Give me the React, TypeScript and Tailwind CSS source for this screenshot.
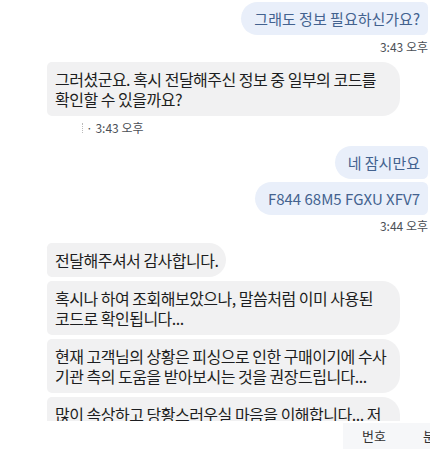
const font = { fontFamily: '"Noto Sans CJK KR", "Noto Sans", sans-serif' };

function Mine({ children, className = "" }: { children: React.ReactNode; className?: string }) {
  return (
    <div className={`flex justify-end ${className}`}>
      <div className="bg-[#e9effa] text-[#43628f] text-[15px] leading-[21px] pl-[13px] pr-[8px] py-[6px] rounded-l-[18px] rounded-r-[6px]">
        {children}
      </div>
    </div>
  );
}

function Theirs({ children, className = "" }: { children: React.ReactNode; className?: string }) {
  return (
    <div className={`flex justify-start ${className}`}>
      <div className="max-w-[353px] bg-[#f1f1f2] text-[#1d1e21] text-[16px] leading-[20px] tracking-[-0.5px] break-keep px-2 py-[7px] rounded-r-[18px] rounded-l-[5px]">
        {children}
      </div>
    </div>
  );
}

export default function App() {
  return (
    <div className="w-[430px] h-[449px] bg-white flex flex-col overflow-hidden" style={font}>
      <div className="flex-1 overflow-hidden pl-[47px] pr-[2px] pt-[2px]">
        <Mine>그래도 정보 필요하신가요?</Mine>
        <div className="text-right text-[12px] leading-4 text-[#4b4f56] mt-[4px]">3:43 오후</div>

        <Theirs className="mt-[7px]">그러셨군요. 혹시 전달해주신 정보 중 일부의 코드를 확인할 수 있을까요?</Theirs>
        <div className="flex items-center text-[12px] leading-4 text-[#4b4f56] mt-[4px] pl-[35px]">
          <span className="inline-block h-[10px] border-l border-dotted border-[#bbb] mr-[3px]" />
          <span>· 3:43 오후</span>
        </div>

        <Mine className="mt-[10px]">네 잠시만요</Mine>
        <Mine className="mt-[3px]">F844 68M5 FGXU XFV7</Mine>
        <div className="text-right text-[12px] leading-4 text-[#4b4f56] mt-[3px]">3:44 오후</div>

        <Theirs className="mt-[9px]">전달해주셔서 감사합니다.</Theirs>
        <Theirs className="mt-[4px]">혹시나 하여 조회해보았으나, 말씀처럼 이미 사용된 코드로 확인됩니다...</Theirs>
        <Theirs className="mt-[4px]">현재 고객님의 상황은 피싱으로 인한 구매이기에 수사 기관 측의 도움을 받아보시는 것을 권장드립니다...</Theirs>
        <Theirs className="mt-[4px]">많이 속상하고 당황스러우실 마음을 이해합니다... 저 역시 최대한 도움을 드리고 싶습니다.</Theirs>
      </div>
      <div className="h-[28px] shrink-0 bg-white flex justify-end pt-[2px]">
        <div className="w-[87px] bg-[#f6f7f9] flex items-center gap-[37px] pl-[19px] text-[13px] text-[#333] whitespace-nowrap overflow-hidden">
          <span>번호</span>
          <span>분류</span>
        </div>
      </div>
    </div>
  );
}
